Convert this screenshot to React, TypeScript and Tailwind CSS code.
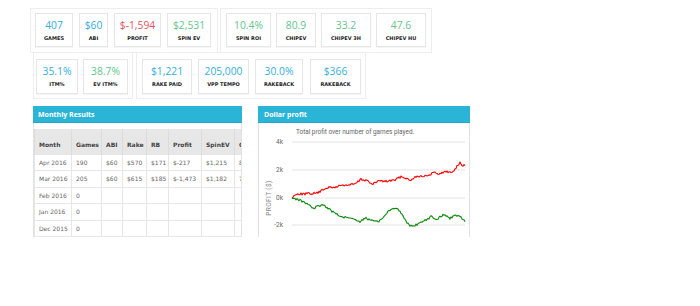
import React from "react";

const BLUE = "text-[#33afdc]";
const GREEN = "text-[#5fc68d]";
const RED = "text-[#e4525d]";

type Stat = { v: string; l: string; c: string; w: string };

function Box({ s, h }: { s: Stat; h: string }) {
  return (
    <div
      className={`${s.w} ${h} flex flex-col items-center border border-[#e6e6e6] bg-white shadow-[0_1px_1px_rgba(0,0,0,0.04)]`}
    >
      <div
        className={`${s.c} mt-[5px] text-[10.3px] leading-[12px] whitespace-nowrap`}
        style={{ fontFamily: '"Open Sans", sans-serif' }}
      >
        {s.v}
      </div>
      <div
        className="mt-[4px] text-[5px] leading-[6px] font-bold text-[#222] whitespace-nowrap"
        style={{ fontFamily: '"DejaVu Sans", Verdana, sans-serif' }}
      >
        {s.l}
      </div>
    </div>
  );
}

const row1a: Stat[] = [
  { v: "407", l: "GAMES", c: BLUE, w: "w-[38px]" },
  { v: "$60", l: "ABI", c: BLUE, w: "w-[29px]" },
  { v: "$-1,594", l: "PROFIT", c: RED, w: "w-[47px]" },
  { v: "$2,531", l: "SPIN EV", c: GREEN, w: "w-[44px]" },
];
const row1b: Stat[] = [
  { v: "10.4%", l: "SPIN ROI", c: GREEN, w: "w-[45px]" },
  { v: "80.9", l: "CHIPEV", c: GREEN, w: "w-[40px]" },
  { v: "33.2", l: "CHIPEV 3H", c: GREEN, w: "w-[50px]" },
  { v: "47.6", l: "CHIPEV HU", c: GREEN, w: "w-[50px]" },
];
const row2a: Stat[] = [
  { v: "35.1%", l: "ITM%", c: BLUE, w: "w-[42px]" },
  { v: "38.7%", l: "EV ITM%", c: GREEN, w: "w-[45px]" },
];
const row2b: Stat[] = [
  { v: "$1,221", l: "RAKE PAID", c: BLUE, w: "w-[50px]" },
  { v: "205,000", l: "VPP TEMPO", c: BLUE, w: "w-[51px]" },
  { v: "30.0%", l: "RAKEBACK", c: BLUE, w: "w-[48px]" },
  { v: "$366", l: "RAKEBACK", c: BLUE, w: "w-[51px]" },
];

const cols = [
  { h: "Month", w: "w-[37px] min-w-[37px]" },
  { h: "Games", w: "w-[30px] min-w-[30px]" },
  { h: "ABI", w: "w-[21px] min-w-[21px]" },
  { h: "Rake", w: "w-[24px] min-w-[24px]" },
  { h: "RB", w: "w-[22px] min-w-[22px]" },
  { h: "Profit", w: "w-[33px] min-w-[33px]" },
  { h: "SpinEV", w: "w-[33px] min-w-[33px]" },
  { h: "ChipEV", w: "w-[36px] min-w-[36px]" },
];

const rows = [
  ["Apr 2016", "190", "$60", "$570", "$171", "$-217", "$1,215", "80.1"],
  ["Mar 2016", "205", "$60", "$615", "$185", "$-1,473", "$1,182", "76.3"],
  ["Feb 2016", "0", "", "", "", "", "", ""],
  ["Jan 2016", "0", "", "", "", "", "", ""],
  ["Dec 2015", "0", "", "", "", "", "", ""],
];

function makeLine(keys: [number, number][], seed: number, amp: number) {
  let s = seed;
  const rnd = () => {
    s = (s * 1103515245 + 12345) % 2147483648;
    return s / 2147483648;
  };
  const pts: string[] = [];
  let k = 0;
  for (let x = keys[0][0]; x <= keys[keys.length - 1][0]; x += 1) {
    while (k < keys.length - 2 && x > keys[k + 1][0]) k++;
    const [x0, v0] = keys[k];
    const [x1, v1] = keys[k + 1];
    const t = (x - x0) / (x1 - x0);
    const v = v0 + (v1 - v0) * t;
    const px = x - 259;
    const py = 75 - v * 13.85 + (x === keys[0][0] ? 0 : (rnd() - 0.5) * amp);
    pts.push(`${px.toFixed(1)},${py.toFixed(1)}`);
  }
  return pts.join(" ");
}

const redKeys: [number, number][] = [
  [292, 0], [296, 0.3], [305, 0.3], [316, 0.35], [320, 0.45], [326, 0.75], [334, 0.75],
  [340, 0.9], [350, 0.95], [356, 1.05], [361, 1.35], [368, 1.25], [372, 0.95],
  [378, 1.25], [385, 1.2], [395, 1.3], [401, 1.55], [406, 1.45], [410, 1.25],
  [415, 1.55], [424, 1.6], [428, 1.55], [433, 1.85], [440, 1.75], [445, 1.9],
  [452, 1.85], [455, 2.1], [460, 2.55], [463, 2.3], [465, 2.4],
];
const greenKeys: [number, number][] = [
  [292, 0], [298, -0.1], [304, -0.3], [310, -0.55], [314, -0.75], [318, -0.55],
  [324, -0.55], [328, -0.75], [333, -1.0], [340, -1.3], [348, -1.45], [355, -1.55],
  [360, -1.7], [365, -1.45], [372, -1.6], [378, -1.7], [383, -1.45], [388, -1.0],
  [392, -0.75], [398, -0.8], [402, -1.2], [406, -1.7], [410, -2.05], [416, -1.95],
  [422, -1.75], [428, -1.5], [432, -1.3], [436, -1.6], [440, -1.35], [444, -1.2],
  [450, -1.45], [455, -1.25], [460, -1.3], [465, -1.7],
];

function Chart() {
  const red = makeLine(redKeys, 7, 2.2);
  const green = makeLine(greenKeys, 13, 2.2);
  const grid = [
    { y: 19, l: "4k" },
    { y: 47, l: "2k" },
    { y: 75, l: "0k" },
    { y: 102, l: "-2k" },
  ];
  return (
    <svg width="210" height="113" className="block" style={{ fontFamily: "Roboto, sans-serif" }}>
      <text x="37" y="11" fontSize="6.4" fill="#666">
        Total profit over number of games played.
      </text>
      {grid.map((g) => (
        <g key={g.l}>
          <line x1="33" x2="206" y1={g.y} y2={g.y} stroke="#e3e3e3" strokeWidth="1" />
          <text x="24" y={g.y + 2.2} fontSize="6.5" fill="#666" textAnchor="end">
            {g.l}
          </text>
        </g>
      ))}
      <text
        x="0"
        y="0"
        fontSize="6.5"
        fill="#888"
        textAnchor="middle"
        transform="translate(11.5,75) rotate(-90)"
        letterSpacing="0.4"
      >
        PROFIT ($)
      </text>
      <polyline points={red} fill="none" stroke="#ff0000" strokeWidth="1.1" strokeLinejoin="round" />
      <polyline points={green} fill="none" stroke="#0b8a0b" strokeWidth="1.1" strokeLinejoin="round" />
    </svg>
  );
}

export default function App() {
  return (
    <div className="w-[700px] h-[306px] bg-white overflow-hidden pl-[30px] pt-[8px]">
      {/* Row 1 */}
      <div className="flex">
        <div className="flex gap-[6px] border border-[#eeeeee] pl-[4px] pr-[6px] pt-[4px] pb-[5px]">
          {row1a.map((s, i) => (
            <Box key={i} s={s} h="h-[34px]" />
          ))}
        </div>
        <div className="ml-[2px] flex gap-[5px] border border-[#eeeeee] pl-[5px] pr-[5px] pt-[4px] pb-[5px]">
          {row1b.map((s, i) => (
            <Box key={i} s={s} h="h-[34px]" />
          ))}
        </div>
      </div>
      {/* Row 2 */}
      <div className="flex ml-[3px] -mt-px">
        <div className="flex gap-[5px] border border-[#eeeeee] pl-[2px] pr-[4px] pt-[6px] pb-[4px]">
          {row2a.map((s, i) => (
            <Box key={i} s={s} h="h-[35px]" />
          ))}
        </div>
        <div className="ml-[3px] flex border border-[#eeeeee] pl-[5px] pr-[4px] pt-[6px] pb-[4px]">
          <Box s={row2b[0]} h="h-[35px]" />
          <div className="ml-[6px]">
            <Box s={row2b[1]} h="h-[35px]" />
          </div>
          <div className="ml-[6px]">
            <Box s={row2b[2]} h="h-[35px]" />
          </div>
          <div className="ml-[7px]">
            <Box s={row2b[3]} h="h-[35px]" />
          </div>
        </div>
      </div>
      {/* Panels */}
      <div className="flex ml-[3px] mt-[7px] gap-[16px]">
        <div className="w-[209px] h-[131px] flex flex-col overflow-hidden">
          <div
            className="h-[17px] bg-[#2ab5d8] border-b border-[#24a7c9] text-white text-[7px] font-bold leading-[17px] px-[5px]"
            style={{ fontFamily: '"Open Sans", sans-serif' }}
          >
            Monthly Results
          </div>
          <div className="flex-1 border-x border-[#e2e2e2] pt-[6px] overflow-hidden">
            <table
              className="border-collapse text-[6px] text-[#666] table-fixed"
              style={{ fontFamily: '"DejaVu Sans", Verdana, sans-serif' }}
            >
              <thead>
                <tr className="h-[25px] bg-[#e7e7e7]">
                  {cols.map((c) => (
                    <th
                      key={c.h}
                      className={`${c.w} text-left align-bottom pb-[5px] pl-[4px] font-bold text-[#444] border-x border-[#dcdcdc] whitespace-nowrap`}
                    >
                      {c.h}
                    </th>
                  ))}
                </tr>
              </thead>
              <tbody>
                {rows.map((r, i) => (
                  <tr key={i} className="h-[16.5px]">
                    {r.map((v, j) => (
                      <td
                        key={j}
                        className="pl-[4px] border border-[#e6e6e6] whitespace-nowrap text-[#666]"
                      >
                        {v}
                      </td>
                    ))}
                  </tr>
                ))}
              </tbody>
            </table>
          </div>
        </div>
        <div className="w-[212px] h-[131px] flex flex-col overflow-hidden">
          <div
            className="h-[17px] bg-[#2ab5d8] border-b border-[#24a7c9] text-white text-[7px] font-bold leading-[17px] px-[6px]"
            style={{ fontFamily: '"Open Sans", sans-serif' }}
          >
            Dollar profit
          </div>
          <div className="flex-1 border-x border-[#e2e2e2] overflow-hidden">
            <Chart />
          </div>
        </div>
      </div>
    </div>
  );
}
